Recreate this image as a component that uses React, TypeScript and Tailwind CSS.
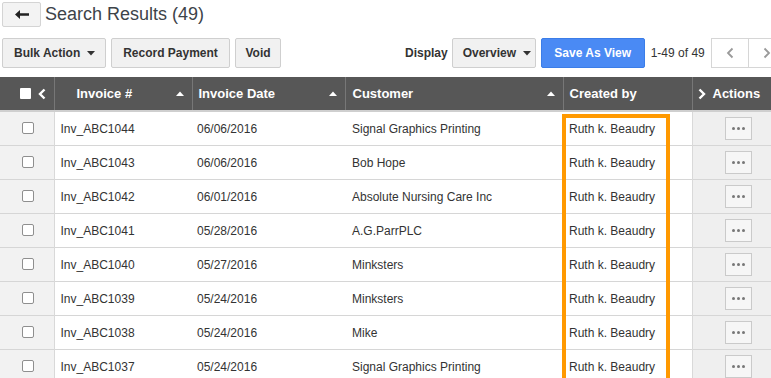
import React from 'react';

const rows = [
  { no: 'Inv_ABC1044', date: '06/06/2016', customer: 'Signal Graphics Printing' },
  { no: 'Inv_ABC1043', date: '06/06/2016', customer: 'Bob Hope' },
  { no: 'Inv_ABC1042', date: '06/01/2016', customer: 'Absolute Nursing Care Inc' },
  { no: 'Inv_ABC1041', date: '05/28/2016', customer: 'A.G.ParrPLC' },
  { no: 'Inv_ABC1040', date: '05/27/2016', customer: 'Minksters' },
  { no: 'Inv_ABC1039', date: '05/24/2016', customer: 'Minksters' },
  { no: 'Inv_ABC1038', date: '05/24/2016', customer: 'Mike' },
  { no: 'Inv_ABC1037', date: '05/24/2016', customer: 'Signal Graphics Printing' },
];

const Caret = () => (
  <svg width="8" height="5" viewBox="0 0 8 5" className="ml-[7px] shrink-0">
    <path d="M0 0h8L4 4.5z" fill="#333" />
  </svg>
);

const SortUp = () => (
  <svg width="8" height="5" viewBox="0 0 8 5" className="shrink-0">
    <path d="M0 5h8L4 0.5z" fill="#fff" />
  </svg>
);

const Chevron = ({ dir, color, w = 2.4 }: { dir: 'l' | 'r'; color: string; w?: number }) => (
  <svg width="8" height="12" viewBox="0 0 8 12" className="shrink-0">
    <path d={dir === 'l' ? 'M6.5 1.5L2 6l4.5 4.5' : 'M1.5 1.5L6 6l-4.5 4.5'} fill="none" stroke={color} strokeWidth={w} />
  </svg>
);

const btn =
  'shrink-0 whitespace-nowrap h-[30px] flex items-center border border-[#cfcfcf] bg-[#f1f1f1] rounded-[2px] text-[12px] font-bold text-[#333]';

export default function App() {
  return (
    <div className="w-[771px] h-[378px] overflow-hidden bg-white font-['Liberation_Sans',Arial,sans-serif] text-[#333]">
      {/* title */}
      <div className="flex items-center pt-[1px] pl-[2px]">
        <button className="w-[39px] h-[25px] flex items-center justify-center border border-[#d4d4d4] bg-[#f3f3f3] rounded-[2px]">
          <svg width="14" height="9" viewBox="0 0 14 9">
            <path d="M0 4.5L5 0v3.3h9v2.4H5V9z" fill="#222" />
          </svg>
        </button>
        <h1 className="ml-[4px] text-[18px] leading-[26px] text-[#3d4349]">Search Results (49)</h1>
      </div>

      {/* toolbar */}
      <div className="flex items-center mt-[11px] pl-[2px] whitespace-nowrap">
        <div className="flex gap-[5px] shrink-0">
          <button className={`${btn} w-[104px] pl-[11px]`}>
            Bulk Action
            <Caret />
          </button>
          <button className={`${btn} w-[119px] justify-center`}>Record Payment</button>
          <button className={`${btn} w-[46px] justify-center`}>Void</button>
        </div>
        <span className="ml-[124px] shrink-0 text-[12px] font-bold">Display</span>
        <button className={`${btn} ml-[4px] w-[84px] pl-[10px]`}>
          Overview
          <Caret />
        </button>
        <button className="shrink-0 ml-[5px] h-[30px] w-[104px] bg-[#4a8af4] border border-[#3b7de8] rounded-[2px] text-white text-[12px] font-bold">
          Save As View
        </button>
        <span className="shrink-0 ml-[6px] text-[12px]">1-49 of 49</span>
        <div className="shrink-0 ml-[6px] flex h-[30px] border border-[#d6d6d6] bg-white">
          <div className="w-[37px] flex items-center justify-center border-r border-[#d6d6d6]">
            <Chevron dir="l" color="#9a9a9a" w={1.8} />
          </div>
          <div className="w-[37px] flex items-center justify-center">
            <Chevron dir="r" color="#9a9a9a" w={1.8} />
          </div>
        </div>
      </div>

      {/* table */}
      <div className="relative mt-[9px]">
        <table className="table-fixed border-collapse w-[771px] text-[12px]">
          <colgroup>
            <col className="w-[54px]" />
            <col className="w-[138px]" />
            <col className="w-[153px]" />
            <col className="w-[218px]" />
            <col className="w-[129px]" />
            <col className="w-[79px]" />
          </colgroup>
          <thead>
            <tr className="h-[34px] bg-[#575757] text-white text-[13px] font-bold border-b-2 border-[#cfcfcf]">
              <th className="border-r border-[#777] p-0">
                <div className="flex items-center justify-end pr-[8px] gap-[7px]">
                  <span className="w-[11px] h-[11px] bg-white rounded-[1px]" />
                  <Chevron dir="l" color="#fff" />
                </div>
              </th>
              <th className="border-r border-[#777] p-0 text-left">
                <div className="flex items-center justify-between pl-[22px] pr-[8px]">
                  Invoice #
                  <SortUp />
                </div>
              </th>
              <th className="border-r border-[#777] p-0 text-left">
                <div className="flex items-center justify-between pl-[6px] pr-[8px]">
                  Invoice Date
                  <SortUp />
                </div>
              </th>
              <th className="border-r border-[#777] p-0 text-left">
                <div className="flex items-center justify-between pl-[7px] pr-[8px]">
                  Customer
                  <SortUp />
                </div>
              </th>
              <th className="border-r border-[#777] p-0 text-left pl-[6px]">Created by</th>
              <th className="p-0 text-left">
                <div className="flex items-center gap-[7px] pl-[5px]">
                  <Chevron dir="r" color="#fff" />
                  Actions
                </div>
              </th>
            </tr>
          </thead>
          <tbody>
            {rows.map((r) => (
              <tr key={r.no} className="h-[34px] border-b border-[#d6d6d6]">
                <td className="bg-[#f2f2f2] border-r border-[#d9d9d9] p-0">
                  <div className="flex justify-center pl-[2px]">
                    <span className="w-[12px] h-[12px] bg-white border border-[#8f8f8f] rounded-[2px]" />
                  </div>
                </td>
                <td className="px-[6px] pt-[1px]">{r.no}</td>
                <td className="px-[5px] pt-[1px]">{r.date}</td>
                <td className="px-[7px] pt-[1px]">{r.customer}</td>
                <td className="px-[6px] pt-[1px]">Ruth k. Beaudry</td>
                <td className="bg-[#efefef] border-l border-[#d9d9d9] p-0">
                  <div className="flex pl-[32px]">
                    <span className="w-[27px] h-[23px] flex items-center justify-center gap-[2px] bg-[#f6f6f6] border border-[#cacaca]">
                      <span className="w-[3px] h-[3px] rounded-full bg-[#777]" />
                      <span className="w-[3px] h-[3px] rounded-full bg-[#777]" />
                      <span className="w-[3px] h-[3px] rounded-full bg-[#777]" />
                    </span>
                  </div>
                </td>
              </tr>
            ))}
          </tbody>
        </table>
        {/* highlight over the Created by column */}
        <div className="absolute left-[562px] top-[37px] w-[108px] h-[300px] border-[4px] border-[#ff9900] pointer-events-none" />
      </div>
    </div>
  );
}
